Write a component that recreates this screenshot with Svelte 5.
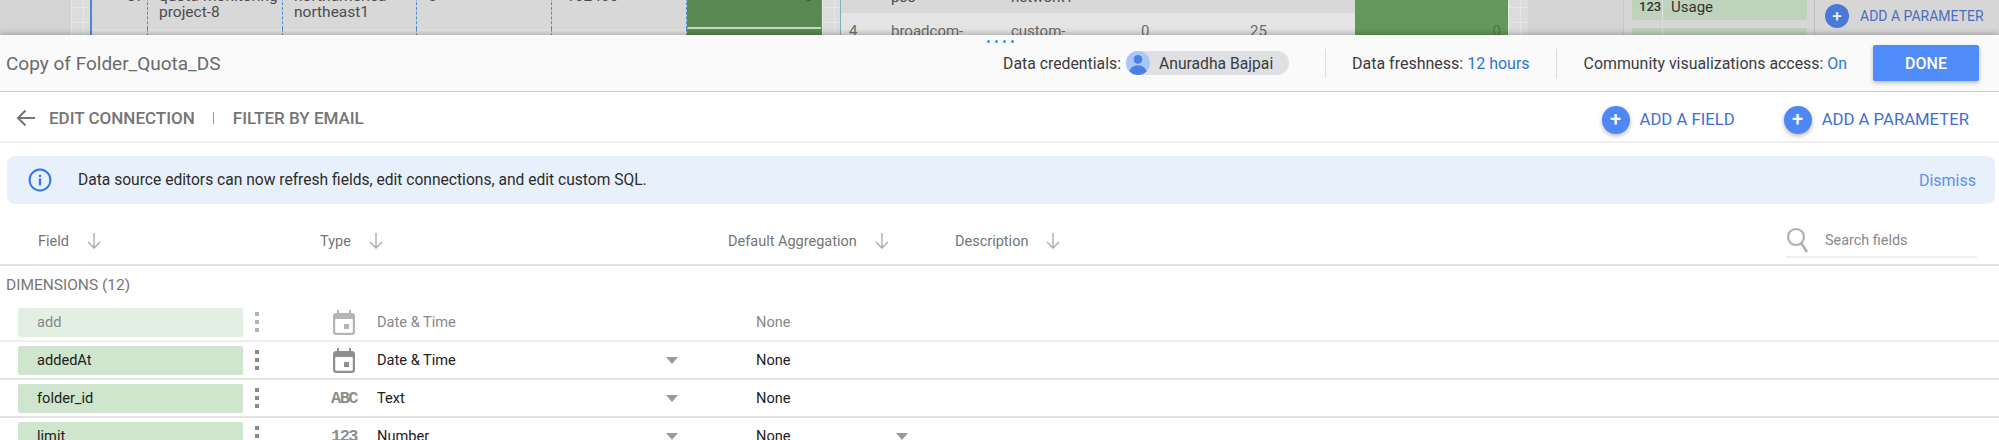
<script lang="ts">
  type FieldRow = {
    name: string;
    icon: "date" | "abc" | "num";
    type: string;
    aggregation: string;
    faded?: boolean;
    aggregationMenu?: boolean;
  };

  const rows: FieldRow[] = [
    { name: "add", icon: "date", type: "Date & Time", aggregation: "None", faded: true },
    { name: "addedAt", icon: "date", type: "Date & Time", aggregation: "None" },
    { name: "folder_id", icon: "abc", type: "Text", aggregation: "None" },
    { name: "limit", icon: "num", type: "Number", aggregation: "None", aggregationMenu: true },
  ];

  const columns = [
    { label: "Field", width: 282 },
    { label: "Type", width: 408 },
    { label: "Default Aggregation", width: 227 },
    { label: "Description", width: 0 },
  ];
</script>

<div class="page">
  <div class="backdrop">
    <div class="gutter" style="width: 71px"></div>
    <div class="canvas" style="width: 19px"></div>

    <div class="table-one">
      <div class="t1-row">
        <span class="c-num">37</span>
        <span class="c-a">quota-monitoring project-8</span>
        <span class="c-b">northamerica- northeast1</span>
        <span class="c-c">0</span>
        <span class="c-d">102400</span>
        <span class="c-bar">0</span>
      </div>
      <div class="t1-row next">
        <span class="c-num"></span><span class="c-a"></span><span class="c-b"></span>
        <span class="c-c"></span><span class="c-d"></span><span class="c-bar"></span>
      </div>
    </div>

    <div class="canvas" style="width: 18px"></div>

    <div class="table-two">
      <div class="t2-row dark">
        <span class="c-num"></span>
        <span class="c-a">pso</span>
        <span class="c-b">network1</span>
        <span></span>
        <span></span>
        <span class="c-bar"></span>
      </div>
      <div class="t2-row">
        <span class="c-num">4</span>
        <span class="c-a">broadcom-</span>
        <span class="c-b">custom-</span>
        <span>0</span>
        <span>25</span>
        <span class="c-bar">0</span>
      </div>
    </div>

    <div class="canvas" style="width: 20px"></div>
    <div class="gutter" style="width: 95px"></div>

    <div class="side-fields">
      <div class="side-chip"><b>123</b><span>Usage</span></div>
      <div class="side-chip"><b></b><span></span></div>
    </div>

    <div class="side-params">
      <span class="mini-plus">+</span>
      <span>ADD A PARAMETER</span>
    </div>
  </div>

  <div class="panel">
    <header class="titlebar">
      <div class="handle"><i></i><i></i><i></i><i></i></div>
      <div class="title">Copy of Folder_Quota_DS</div>
      <div class="credentials">
        <span>Data credentials:</span>
        <span class="user-chip">
          <svg class="avatar" viewBox="0 0 24 24" width="24" height="24">
            <circle cx="12" cy="12" r="12" fill="#a9c6fb" />
            <circle cx="12" cy="8.4" r="4.3" fill="#4d7fe2" />
            <path d="M3.4 20.4c1-4.2 4.4-6 8.6-6s7.6 1.8 8.6 6a12 12 0 0 1-17.2 0z" fill="#4d7fe2" />
          </svg>
          Anuradha Bajpai
        </span>
      </div>
      <div class="meta first"><span>Data freshness: <span class="link">12 hours</span></span></div>
      <div class="meta second"><span>Community visualizations access: <span class="link">On</span></span></div>
      <button class="done" type="button">DONE</button>
    </header>

    <nav class="crumbs">
      <svg class="back" viewBox="0 0 20 18" width="20" height="18">
        <path d="M19 9H2M9.5 1.5 2 9l7.5 7.5" fill="none" stroke="#757575" stroke-width="2" />
      </svg>
      <span class="crumb edit">EDIT CONNECTION</span>
      <span class="bar"></span>
      <span class="crumb">FILTER BY EMAIL</span>
      <button class="add field" type="button"><span class="plus">+</span>ADD A FIELD</button>
      <button class="add" type="button"><span class="plus">+</span>ADD A PARAMETER</button>
    </nav>

    <div class="banner">
      <svg viewBox="0 0 24 24" width="24" height="24">
        <circle cx="12" cy="12" r="10.4" fill="none" stroke="#2f74ea" stroke-width="2" />
        <rect x="10.9" y="10.4" width="2.2" height="7" fill="#2f74ea" />
        <rect x="10.9" y="6.8" width="2.2" height="2.2" fill="#2f74ea" />
      </svg>
      <span class="banner-text">Data source editors can now refresh fields, edit connections, and edit custom SQL.</span>
      <span class="dismiss">Dismiss</span>
    </div>

    <div class="columns">
      {#each columns as column}
        <div class="column" style:width={column.width ? `${column.width}px` : null}>
          <span>{column.label}</span>
          <svg viewBox="0 0 16 18" width="16" height="18">
            <path d="M8 1v15M2 10l6 6 6-6" fill="none" stroke="#a8a8a8" stroke-width="1.3" />
          </svg>
        </div>
      {/each}
      <div class="search">
        <svg viewBox="0 0 24 26" width="24" height="26">
          <circle cx="10" cy="10" r="8" fill="none" stroke="#b0b0b0" stroke-width="2.2" />
          <path d="M15.5 16.5 21 25" stroke="#b0b0b0" stroke-width="2.6" />
        </svg>
        <span>Search fields</span>
      </div>
    </div>

    <div class="group">DIMENSIONS (12)</div>

    {#each rows as row}
      <div class="row" class:faded={row.faded}>
        <div class="chip">{row.name}</div>
        <div class="kebab"><i></i><i></i><i></i></div>
        <div class="type-icon">
          {#if row.icon === "date"}
            <svg viewBox="0 0 22 25" width="22" height="25">
              <path d="M4 0h2v3h10V0h2v3h1a3 3 0 0 1 3 3v16a3 3 0 0 1-3 3H3a3 3 0 0 1-3-3V6a3 3 0 0 1 3-3h1z" fill="#8f8f8f" />
              <rect x="2.2" y="9" width="17.6" height="13.8" rx="1" fill="#fff" />
              <rect x="11" y="14" width="5" height="5" fill="#8f8f8f" />
            </svg>
          {:else if row.icon === "abc"}
            <span class="glyph">ABC</span>
          {:else}
            <span class="glyph">123</span>
          {/if}
        </div>
        <div class="type-name">{row.type}</div>
        <div class="menu-cell">
          {#if !row.faded}<span class="tri"></span>{/if}
        </div>
        <div class="aggregation">{row.aggregation}</div>
        <div class="menu-cell small">
          {#if row.aggregationMenu}<span class="tri"></span>{/if}
        </div>
      </div>
    {/each}
  </div>
</div>

<style>
  :global(body) {
    margin: 0;
    background: #fff;
  }

  .page {
    width: 1999px;
    height: 440px;
    overflow: hidden;
    font-family: Roboto, "Liberation Sans", sans-serif;
    font-size: 16px;
    color: #212121;
  }

  button {
    font-family: inherit;
    border: 0;
    padding: 0;
    cursor: pointer;
  }

  /* report canvas showing behind the editor panel */
  .backdrop {
    display: flex;
    height: 35px;
    overflow: hidden;
    background: #d6d6d6;
    font-size: 15.5px;
    line-height: 16px;
    color: #4c4c4c;
  }

  .gutter {
    flex: none;
    background: #d4d4d4;
  }

  .canvas {
    flex: none;
    background-color: #dcdcdc;
    background-image:
      linear-gradient(#e6e6e6 1px, transparent 1px),
      linear-gradient(90deg, #e6e6e6 1px, transparent 1px);
    background-size: 12px 15px;
    background-position: 0 7px;
  }

  .table-one {
    flex: none;
    box-sizing: border-box;
    width: 732px;
    border-left: 2px solid #4a8ad4;
    border-right: 1px solid #3f86d8;
  }

  .t1-row {
    display: grid;
    grid-template-columns: 56px 135px 134px 135px 135px 134px;
    box-sizing: border-box;
    height: 41px;
    margin-top: -12px;
    background: #d8d8d8;
  }

  .t1-row.next {
    height: 7px;
    margin-top: 0;
    background: #e2e2e2;
  }

  .t1-row span {
    box-sizing: border-box;
    padding: 0 0 0 11px;
    border-right: 1px dashed #4a8ad4;
  }

  .t1-row .c-num {
    padding-left: 35px;
  }

  .t1-row .c-d {
    padding-left: 14px;
  }

  .t1-row .c-bar {
    padding-right: 8px;
    text-align: right;
    border-right: 0;
    border-left: 1px dashed #3f86d8;
    border-bottom: 2px solid #c9d6c4;
    background: #5a8852;
    color: #3d5c38;
  }

  .t1-row.next .c-bar {
    border-bottom: 0;
  }

  .table-two {
    flex: none;
    box-sizing: border-box;
    width: 668px;
    border-left: 1px solid #7fb0b8;
    border-right: 1px solid #7fb0b8;
    background: #e4e4e4;
    font-size: 15px;
  }

  .t2-row {
    display: grid;
    grid-template-columns: 50px 120px 130px 109px 105px 153px;
    box-sizing: border-box;
    height: 22px;
    color: #6b6b6b;
  }

  .t2-row span {
    padding: 10px 0 0 0;
    white-space: nowrap;
  }

  .t2-row .c-num {
    padding-left: 8px;
  }

  .t2-row .c-bar {
    padding: 10px 7px 0 0;
    text-align: right;
    background: #64975c;
    color: #4f7849;
  }

  .t2-row.dark {
    height: 13px;
    background: #d8d8d8;
    color: #4c4c4c;
  }

  .t2-row.dark span {
    padding: 0;
    margin-top: -11px;
  }

  .t2-row.dark .c-bar {
    margin-top: 0;
    height: 13px;
    border-bottom: 2px solid #c9d6c4;
    box-sizing: content-box;
  }

  .side-fields {
    flex: none;
    box-sizing: border-box;
    width: 192px;
    padding: 0 7px 0 8px;
    border-left: 1px solid #c6c6c6;
    border-right: 1px solid #bdbdbd;
    background: #d6d6d6;
  }

  .side-chip {
    display: flex;
    height: 20px;
    margin-bottom: 8px;
    border-radius: 0 0 3px 3px;
    background: #bfd2bc;
    color: #333;
    line-height: 14px;
  }

  .side-chip b {
    flex: none;
    box-sizing: border-box;
    width: 31px;
    padding-left: 7px;
    font-size: 13px;
    font-weight: 500;
    border-right: 1px solid #dbe5d9;
  }

  .side-chip span {
    padding-left: 8px;
    font-size: 15px;
  }

  .side-params {
    display: flex;
    flex: 1;
    align-items: flex-start;
    gap: 11px;
    padding: 4px 0 0 10px;
    background: #d6d6d6;
    color: #4c6dbd;
    font-size: 14px;
    line-height: 24px;
    white-space: nowrap;
  }

  .mini-plus {
    flex: none;
    width: 24px;
    height: 24px;
    border-radius: 50%;
    background: #4c78d6;
    color: #eef;
    font-size: 17px;
    font-weight: 500;
    text-align: center;
  }

  /* editor panel */
  .panel {
    position: relative;
    background: #fff;
    box-shadow: 0 -2px 5px rgba(0, 0, 0, 0.22);
  }

  .titlebar {
    position: relative;
    display: flex;
    align-items: center;
    box-sizing: border-box;
    height: 57px;
    padding: 0 20px 0 6px;
    border-bottom: 1px solid #ccc;
    background: #fafafa;
  }

  .handle {
    position: absolute;
    top: 5px;
    left: 987px;
    display: flex;
    gap: 5px;
  }

  .handle i {
    width: 3px;
    height: 3px;
    border-radius: 50%;
    background: #3b8ef0;
  }

  .title {
    flex: 1;
    font-size: 19px;
    color: #6a6a6a;
  }

  .credentials {
    display: flex;
    align-items: center;
    gap: 5px;
    padding-right: 36px;
    border-right: 1px solid #ddd;
    height: 29px;
    color: #3c3c3c;
    font-size: 15.8px;
  }

  .user-chip {
    display: flex;
    align-items: center;
    gap: 9px;
    width: 163px;
    height: 24px;
    border-radius: 12px;
    background: #dfe0e4;
    color: #3c3c3c;
    font-size: 15.7px;
  }

  .meta {
    display: flex;
    align-items: center;
    height: 29px;
    color: #3c3c3c;
  }

  .meta.first {
    padding: 0 26px 0 26px;
    border-right: 1px solid #ddd;
  }

  .meta.second {
    padding: 0 26px 0 27px;
    font-size: 15.9px;
  }

  .link {
    color: #2f74d8;
  }

  .done {
    width: 106px;
    height: 36px;
    border-radius: 2px;
    background: #4f8bf9;
    color: #fff;
    font-size: 16px;
    font-weight: 500;
    box-shadow: 0 2px 4px rgba(0, 0, 0, 0.25);
  }

  .crumbs {
    display: flex;
    align-items: center;
    box-sizing: border-box;
    height: 51px;
    padding: 3px 30px 0 16px;
    border-bottom: 2px solid #eee;
  }

  .back {
    margin-right: 13px;
  }

  .crumb {
    font-size: 17px;
    font-weight: 500;
    color: #757575;
  }

  .bar {
    width: 1px;
    height: 12px;
    margin: 0 19px 0 18px;
    background: #999;
  }

  .edit {
    white-space: nowrap;
  }

  .add {
    display: flex;
    align-items: center;
    gap: 10px;
    height: 30px;
    margin: 3px 0 0 49px;
    background: none;
    color: #3f6fd6;
    font-size: 16.7px;
    white-space: nowrap;
  }

  .add.field {
    margin-left: auto;
  }

  .plus {
    width: 28px;
    height: 28px;
    border-radius: 50%;
    background: #4f87f5;
    color: #fff;
    font-size: 20px;
    line-height: 27px;
    font-weight: 500;
    box-shadow: 0 2px 4px rgba(0, 0, 0, 0.28);
  }

  .banner {
    display: flex;
    align-items: center;
    box-sizing: border-box;
    height: 48px;
    margin: 13px 4px 0 7px;
    padding: 0 19px 0 21px;
    border-radius: 8px;
    background: #e8f0fc;
  }

  .banner-text {
    flex: 1;
    margin-left: 26px;
    color: #2c2c2c;
    font-size: 15.6px;
  }

  .dismiss {
    color: #5b8ff0;
  }

  .columns {
    position: relative;
    display: flex;
    align-items: center;
    box-sizing: border-box;
    height: 62px;
    padding: 14px 22px 0 38px;
    border-bottom: 2px solid #e4e4e4;
    color: #757575;
    font-size: 14.5px;
  }

  .column {
    display: flex;
    align-items: center;
    gap: 17px;
    flex: none;
  }

  .search {
    display: flex;
    align-items: center;
    gap: 15px;
    width: 191px;
    height: 32px;
    margin: 0 0 0 auto;
    border-bottom: 2px solid #eee;
    color: #8a8a8a;
    font-size: 14.4px;
  }

  .group {
    box-sizing: border-box;
    height: 38px;
    padding: 10px 0 0 6px;
    color: #777;
    font-size: 15.5px;
    line-height: 18px;
  }

  .row {
    display: flex;
    align-items: center;
    box-sizing: border-box;
    height: 38px;
    padding-left: 18px;
    border-bottom: 2px solid #e4e4e4;
    font-size: 14.6px;
  }

  .row.faded {
    border-color: #eee;
  }

  .chip {
    flex: none;
    box-sizing: border-box;
    width: 225px;
    height: 29px;
    padding-left: 19px;
    border-radius: 2px;
    background: #cfe5cd;
    line-height: 28px;
  }

  .faded .chip {
    background: #e3efe3;
    color: #888;
  }

  .kebab {
    display: flex;
    flex: none;
    flex-direction: column;
    gap: 4px;
    width: 4px;
    margin: 0 74px 0 12px;
  }

  .kebab i {
    width: 4px;
    height: 4px;
    background: #8a8a8a;
  }

  .type-icon {
    display: flex;
    flex: none;
    justify-content: center;
    width: 26px;
    margin-left: -2px;
  }

  .faded .type-icon,
  .faded .kebab {
    opacity: 0.65;
  }

  .glyph {
    font-family: "Liberation Mono", monospace;
    font-size: 17px;
    font-weight: 700;
    color: #8f8f8f;
    letter-spacing: -1.6px;
  }

  .type-name {
    flex: none;
    width: 289px;
    margin-left: 20px;
  }

  .faded .type-name,
  .faded .aggregation {
    color: #888;
  }

  .menu-cell {
    display: flex;
    flex: none;
    align-items: center;
    width: 90px;
  }

  .menu-cell.small {
    width: 100px;
  }

  .tri {
    width: 0;
    height: 0;
    border-left: 6px solid transparent;
    border-right: 6px solid transparent;
    border-top: 7px solid #9a9a9a;
  }

  .aggregation {
    flex: none;
    width: 140px;
  }
</style>
